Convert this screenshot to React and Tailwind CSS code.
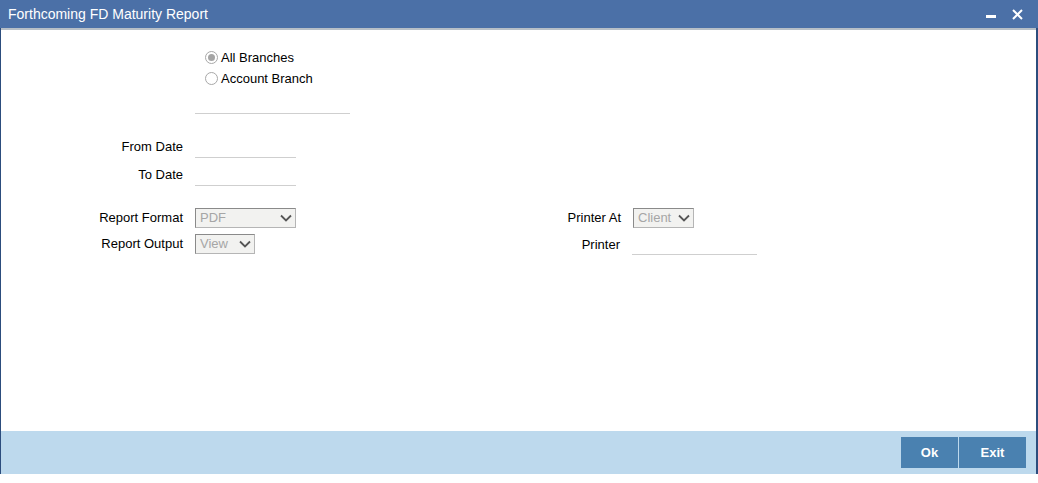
import React from 'react';

const Chevron = () => (
    <svg width="12" height="8" viewBox="0 0 12 8" className="shrink-0">
        <path d="M1 1.5 L6 6.5 L11 1.5" fill="none" stroke="#555" strokeWidth="1.8" />
    </svg>
);

const Select = ({ value, width }) => (
    <div
        className={`h-[20px] ${width} flex items-center justify-between pl-[4px] pr-[3px] bg-[#f2f2f0] border border-[#b5b5b5] border-t-[#8a8a8a] border-l-[#8a8a8a] text-[#a6a6a6]`}
    >
        <span>{value}</span>
        <Chevron />
    </div>
);

const Radio = ({ checked, label }) => (
    <label className="flex items-center h-[21px] gap-[3px] text-black">
        <span className="w-[13px] h-[13px] rounded-full border border-[#a8a8a8] bg-white flex items-center justify-center">
            {checked && <span className="w-[7px] h-[7px] rounded-full bg-[#a5a5a5]" />}
        </span>
        <span>{label}</span>
    </label>
);

// fila de etiqueta + campo
const Row = ({ label, labelW, children, className = '' }) => (
    <div className={`flex items-center ${className}`}>
        <div className={`${labelW} text-right pr-[12px] text-black`}>{label}</div>
        {children}
    </div>
);

export default function App() {
    return (
        <div className="w-[1038px] h-[483px] bg-white" style={{ fontFamily: '"Liberation Sans", Arial, sans-serif' }}>
            <div className="h-[474px] flex flex-col border-l border-r-2 border-[#2c4d7d]">
                {/* barra de titulo */}
                <div className="h-[28px] -ml-px -mr-[2px] bg-[#4b70a7] flex items-center justify-between pl-[8px] pr-[15px] shrink-0">
                    <span className="text-white text-[14px]">Forthcoming FD Maturity Report</span>
                    <div className="flex items-center gap-[16px]">
                        <span className="w-[10px] h-[3px] bg-white mt-[4px]" />
                        <svg width="11" height="11" viewBox="0 0 11 11">
                            <path d="M1 1 L10 10 M10 1 L1 10" stroke="white" strokeWidth="2" />
                        </svg>
                    </div>
                </div>
                <div className="h-[2px] bg-[#b7bfc7] shrink-0" />

                {/* cuerpo */}
                <div className="flex-1 text-[13px] pt-[17px]">
                    <div className="pl-[204px]">
                        <Radio checked label="All Branches" />
                        <Radio label="Account Branch" />
                    </div>
                    <div className="ml-[194px] mt-[24px] w-[155px] border-b border-[#cfcfcf]" />

                    <div className="mt-[22px] flex flex-col gap-[6px]">
                        <Row label="From Date" labelW="w-[194px]" className="h-[22px]">
                            <div className="w-[101px] h-[22px] border-b border-[#cfcfcf]" />
                        </Row>
                        <Row label="To Date" labelW="w-[194px]" className="h-[22px]">
                            <div className="w-[101px] h-[22px] border-b border-[#cfcfcf]" />
                        </Row>
                    </div>

                    <div className="flex mt-[22px]">
                        <div className="w-[440px] flex flex-col gap-[6px]">
                            <Row label="Report Format" labelW="w-[194px]">
                                <Select value="PDF" width="w-[101px]" />
                            </Row>
                            <Row label="Report Output" labelW="w-[194px]">
                                <Select value="View" width="w-[60px]" />
                            </Row>
                        </div>
                        <div className="flex flex-col gap-[6px]">
                            <Row label="Printer At" labelW="w-[192px]">
                                <Select value="Client" width="w-[61px]" />
                            </Row>
                            <Row label="Printer" labelW="w-[191px]">
                                <div className="w-[125px] h-[20px] border-b border-[#cfcfcf] mt-[1px]" />
                            </Row>
                        </div>
                    </div>
                </div>

                {/* pie */}
                <div className="h-[43px] bg-[#bdd9ed] flex items-center justify-end pr-[10px] gap-px shrink-0">
                    <button className="w-[57px] h-[31px] bg-[#4a81b0] text-white font-bold text-[13px]">Ok</button>
                    <button className="w-[67px] h-[31px] bg-[#4a81b0] text-white font-bold text-[13px]">Exit</button>
                </div>
            </div>
        </div>
    );
}
